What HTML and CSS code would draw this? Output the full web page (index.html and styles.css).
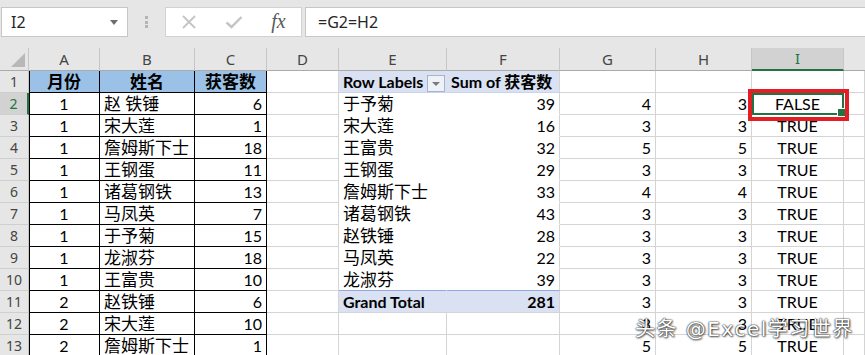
FILE: index.html
```html
<!DOCTYPE html>
<html lang="zh-CN">
<head>
    <meta charset="UTF-8">
    <meta name="viewport" content="width=device-width, initial-scale=1.0">
    <title>获客数 - 数据透视表</title>
    <link rel="stylesheet" href="styles.css">
</head>
<body>

<div class="app">
    <div class="formula-bar">
        <div class="name-box"><span>I2</span><i class="caret"></i></div>
        <div class="grip"><i></i><i></i><i></i></div>
        <div class="fx-buttons">
            <span>
                <svg width="14" height="14" viewBox="0 0 14 14"><path d="M1 1 L13 13 M13 1 L1 13" stroke="#c4c4c4" stroke-width="1.8" fill="none"/></svg>
            </span>
            <span>
                <svg width="18" height="14" viewBox="0 0 18 14"><path d="M1.5 7.5 L6.5 12 L16.5 2" stroke="#c4c4c4" stroke-width="2.4" fill="none"/></svg>
            </span>
            <span class="fx">fx</span>
        </div>
        <div class="formula-input">=G2=H2</div>
    </div>

    <div class="sheet" id="sheet"></div>

    <div class="mark-box"></div>
    <div class="watermark">头条 @Excel学习世界</div>
</div>

<script>
    // Данные листа: столбцы A..I
    var data = [
        ['月份', '姓名', '获客数', '', 'Row Labels', 'Sum of 获客数', '', '', ''],
        ['1', '赵 铁锤', '6', '', '于予菊', '39', '4', '3', 'FALSE'],
        ['1', '宋大莲', '1', '', '宋大莲', '16', '3', '3', 'TRUE'],
        ['1', '詹姆斯下士', '18', '', '王富贵', '32', '5', '5', 'TRUE'],
        ['1', '王钢蛋', '11', '', '王钢蛋', '29', '3', '3', 'TRUE'],
        ['1', '诸葛钢铁', '13', '', '詹姆斯下士', '33', '4', '4', 'TRUE'],
        ['1', '马凤英', '7', '', '诸葛钢铁', '43', '3', '3', 'TRUE'],
        ['1', '于予菊', '15', '', '赵铁锤', '28', '3', '3', 'TRUE'],
        ['1', '龙淑芬', '18', '', '马凤英', '22', '3', '3', 'TRUE'],
        ['1', '王富贵', '10', '', '龙淑芬', '39', '3', '3', 'TRUE'],
        ['2', '赵铁锤', '6', '', 'Grand Total', '281', '3', '3', 'TRUE'],
        ['2', '宋大莲', '10', '', '', '', '3', '3', 'TRUE'],
        ['2', '詹姆斯下士', '1', '', '', '', '5', '5', 'TRUE']
    ];
    var letters = ['A', 'B', 'C', 'D', 'E', 'F', 'G', 'H', 'I', ''];
    var align = ['center', 'left', 'right', 'left', 'left', 'right', 'right', 'right', 'center', 'left'];
    var sheet = document.getElementById('sheet');

    function addCell(cls, text) {
        var el = document.createElement('div');
        el.className = 'cell ' + cls;
        el.textContent = text;
        sheet.appendChild(el);
        return el;
    }

    // Заголовки столбцов
    var corner = addCell('col-head corner', '');
    corner.innerHTML = '<svg width="29" height="22" viewBox="0 0 29 22"><polygon points="25,5 25,19 11,19" fill="#b8b8b8"/></svg>';
    letters.forEach(function(l) {
        addCell('col-head' + (l === 'I' ? ' active' : '') + (l === '' ? ' last' : ''), l);
    });

    // Строки
    data.forEach(function(row, r) {
        addCell('row-head' + (r === 1 ? ' active' : ''), r + 1);
        for (var c = 0; c < letters.length; c++) {
            var value = row[c] || '';
            var cls = align[c];
            if (c < 3) cls += ' tbl';
            if (c === 0) cls += ' col-a';
            if (r === 0 && c < 3) cls += ' tbl-head';
            if (c === 4 || c === 5) {
                if (r === 0) cls += ' pv-head';
                else if (r < 10) cls += ' pv-body';
                else if (r === 10) cls += ' pv-total';
                if (r === 9) cls += ' pv-last';
                if (c === 4 && r <= 10) cls += ' pv-e';
            }
            if (/^[\u4e00-\u9fff ]+$/.test(value)) cls += ' zh';
            if (r === 1 && c === 8) cls += ' current';

            var el = addCell(cls, value);
            if (r === 0 && c === 4) {
                el.className += ' pv-filter';
                el.innerHTML = '<span>Row Labels</span><i class="pv-drop"></i>';
            }
        }
    });
</script>

</body>
</html>
```

FILE: styles.css
```css
/* Общие */
* {
    box-sizing: border-box;
}
body {
    margin: 0;
    background: #fff;
}
.app {
    position: relative;
    width: 865px;
    height: 355px;
    overflow: hidden;
    font-family: "Lato", "Noto Sans CJK SC", sans-serif;
}

/* Строка формул */
.formula-bar {
    display: flex;
    height: 48px;
    padding-top: 7px;
    background: #e6e6e6;
    font-family: "Noto Sans", "Noto Sans CJK SC", sans-serif;
    font-size: 16px;
    color: #262626;
}
.name-box {
    display: flex;
    align-items: center;
    justify-content: space-between;
    width: 127px;
    height: 30px;
    margin-left: 1px;
    padding: 0 9px;
    background: #fff;
    border: 1px solid #c6c6c6;
}
.caret {
    width: 0;
    height: 0;
    border-top: 5px solid #6e6e6e;
    border-left: 4px solid transparent;
    border-right: 4px solid transparent;
}
.grip {
    display: flex;
    flex-direction: column;
    align-items: center;
    gap: 1.5px;
    width: 37px;
    padding-top: 9px;
}
.grip i {
    width: 3px;
    height: 3px;
    background: #b5b5b5;
}
.fx-buttons {
    display: flex;
    width: 137px;
    height: 30px;
    background: #fff;
    border: 1px solid #d2d2d2;
}
.fx-buttons span {
    display: flex;
    align-items: center;
    justify-content: center;
    width: 45px;
}
.fx-buttons .fx {
    font-family: "Liberation Serif", serif;
    font-style: italic;
    font-size: 20px;
    color: #595959;
    padding-bottom: 2px;
}
.formula-input {
    flex: 1;
    height: 30px;
    margin-left: 3px;
    padding-left: 12px;
    line-height: 28px;
    background: #fff;
    border: 1px solid #c6c6c6;
    border-right: 0;
}

/* Лист */
.sheet {
    display: grid;
    grid-template-columns: 29px 71px 95px 72px 72px 108px 113px 96px 96px 92px 21px;
    grid-template-rows: 23px;
    grid-auto-rows: 22px;
    font-size: 16px;
    color: #000;
}
.cell {
    padding: 0 4px;
    line-height: 21px;
    white-space: nowrap;
    overflow: hidden;
    border-right: 1px solid #d4d4d4;
    border-bottom: 1px solid #d4d4d4;
}
.left { text-align: left; }
.right { text-align: right; }
.center { text-align: center; }
.zh {
    font-size: 17px;
}

.col-head {
    padding: 0;
    line-height: 22px;
    text-align: center;
    font-family: "Noto Sans", sans-serif;
    font-size: 15px;
    color: #444;
    background: #e6e6e6;
    border-right-color: #c6c6c6;
    border-bottom-color: #ababab;
}
.col-head.last {
    border-right: 0;
}
.col-head.active {
    line-height: 21px;
    color: #217346;
    background: #d2d2d2;
    border-bottom: 2px solid #217346;
}
.corner svg {
    display: block;
}
.row-head {
    padding: 0;
    text-align: center;
    font-family: "Noto Sans", sans-serif;
    font-size: 14px;
    color: #444;
    background: #e6e6e6;
    border-right-color: #c6c6c6;
    border-bottom-color: #cfcfcf;
}
.row-head.active {
    color: #217346;
    background: #d2d2d2;
    border-right: 2px solid #217346;
}

/* Исходная таблица */
.tbl {
    border-right-color: #000;
    border-bottom-color: #000;
}
.col-a {
    box-shadow: inset 1px 0 #000;
}
.tbl-head {
    text-align: center;
    font-weight: bold;
    background: #9bc2e6;
}

/* Сводная таблица */
.pv-head {
    text-align: left;
    font-weight: bold;
    background: #d9e1f2;
    border-bottom-color: #c9d4ec;
}
.pv-body {
    background: #fff;
    border-bottom-color: #fff;
}
.pv-last {
    border-bottom-color: #8ea9db;
}
.pv-total {
    font-weight: bold;
    background: #d9e1f2;
}
.pv-e.pv-head,
.pv-e.pv-total {
    border-right-color: #d9e1f2;
}
.pv-e.pv-body {
    border-right-color: #fff;
}
.pv-filter {
    display: flex;
    align-items: flex-end;
    justify-content: space-between;
    padding-right: 1px;
}
.pv-drop {
    display: flex;
    align-items: center;
    justify-content: center;
    width: 18px;
    height: 17px;
    background: #eef1f8;
    border: 1px solid #a9b4cc;
}
.pv-drop::after {
    content: '';
    border-top: 4px solid #7a7a7a;
    border-left: 4px solid transparent;
    border-right: 4px solid transparent;
}

/* Активная ячейка */
.current {
    position: relative;
    overflow: visible;
    z-index: 1;
}
.current::after {
    content: '';
    position: absolute;
    left: 0;
    top: 0;
    right: -1px;
    bottom: -1px;
    border: 2px solid #217346;
}
.current::before {
    content: '';
    position: absolute;
    right: -3px;
    bottom: -3px;
    width: 7px;
    height: 7px;
    background: #217346;
    border: 1px solid #fff;
    z-index: 2;
}

/* Пометки поверх листа */
.mark-box {
    position: absolute;
    left: 748px;
    top: 89px;
    width: 101px;
    height: 32px;
    border: 4px solid #e31e24;
    z-index: 3;
}
.watermark {
    position: absolute;
    left: 635px;
    top: 317px;
    font-family: "DejaVu Sans", "Noto Sans CJK SC", sans-serif;
    font-size: 20px;
    line-height: 24px;
    letter-spacing: 1.5px;
    color: #fff;
    text-shadow: 0 0 1px #2b2b2b, 0 0 2px #2b2b2b, 1px 1px 2px rgba(0, 0, 0, 0.6);
    white-space: nowrap;
    z-index: 4;
}
```
